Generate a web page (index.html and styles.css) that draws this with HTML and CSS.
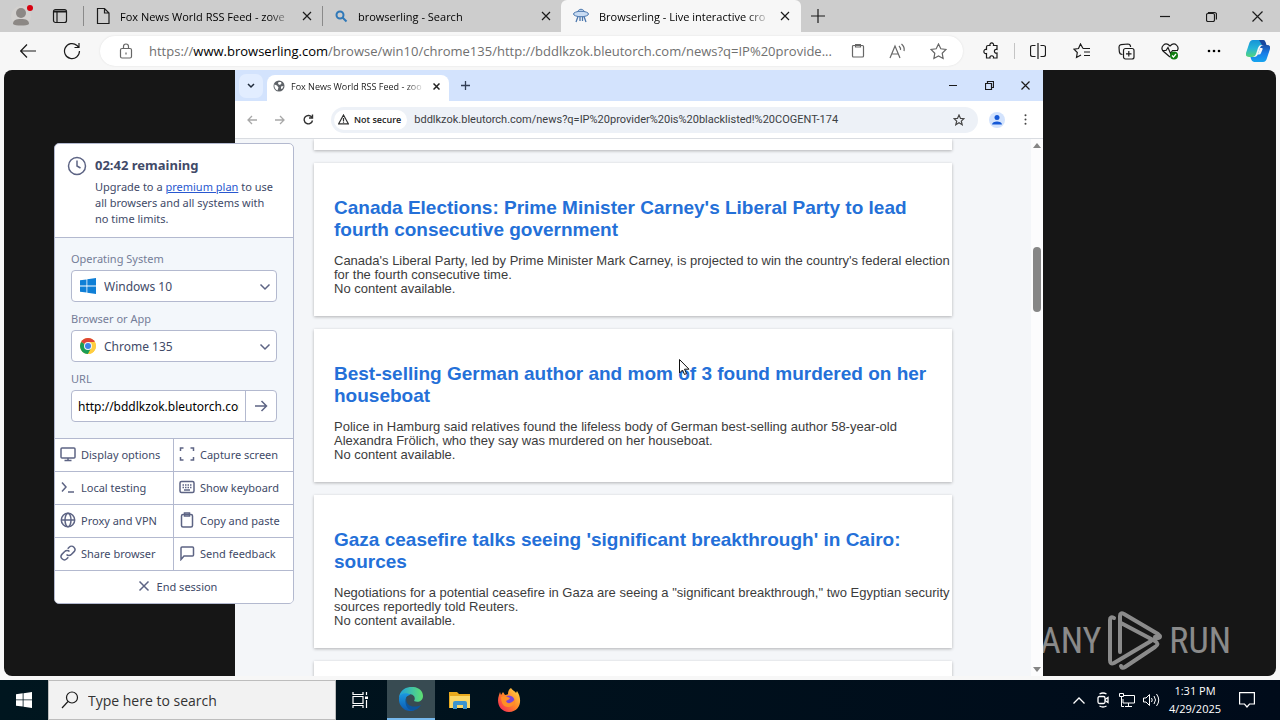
FILE: index.html
```html
<!DOCTYPE html>
<html lang="en">
<head>
<meta charset="utf-8">
<title>Browserling - Live interactive cross-browser testing</title>
<link rel="stylesheet" href="styles.css">
</head>
<body>
<div class="desktop">
  <header class="tabstrip">
    <button class="profile" aria-label="Profile"><svg width="22" height="22" viewBox="0 0 22 22"><circle cx="10" cy="11" r="10" fill="#d3d1cf"/><circle cx="10" cy="8" r="5" fill="#8c8885"/><path d="M2 19c0-4 3-5 8-5s8 1 8 5c-2 2-14 2-16 0z" fill="#8c8885"/><circle cx="19" cy="3" r="3" fill="#d8000f"/></svg></button>
    <button class="workspaces" aria-label="Tab actions"><svg class="line" width="16" height="16" viewBox="0 0 16 16"><rect x="1.500" y="1.500" width="13" height="13" rx="2"/><path d="M1.500 4h13M2 3h12M5 4v10"/></svg></button>
    <span class="strip-sep"></span>
    <div class="tab tab-first"><svg class="line" width="16" height="18" viewBox="0 0 16 18"><path d="M2.500 1.500h7l4.500 4.500v10.500h-11.500zM9.500 1.500v4.500h4.500"/></svg><span class="tab-title">Fox News World RSS Feed - zove</span><button class="close" aria-label="Close tab"><svg class="line" width="10" height="10" viewBox="0 0 10 10"><path d="M1 1l8 8M9 1l-8 8"/></svg></button></div>
    <span class="strip-sep"></span>
    <div class="tab"><svg width="14" height="14" viewBox="0 0 14 14" fill="none" stroke="#2f78b8" stroke-width="2"><circle cx="6" cy="6" r="3.500"/><path d="M8.500 8.500l4 4"/></svg><span class="tab-title">browserling - Search</span><button class="close" aria-label="Close tab"><svg class="line" width="10" height="10" viewBox="0 0 10 10"><path d="M1 1l8 8M9 1l-8 8"/></svg></button></div>
    <div class="tab tab-active"><svg width="18" height="16" viewBox="0 0 18 16" fill="#c9dcf3" stroke="#4d78ae"><path d="M5.500 5c0-5 7-5 7 0"/><ellipse cx="9" cy="6" rx="7.500" ry="2.700"/><path d="M6 8.500l-2 5.500M8 9v4M10.500 9v4M12 8.500l2 5.500" fill="none" stroke-width="1.300"/></svg><span class="tab-title">Browserling - Live interactive cro</span><button class="close" aria-label="Close tab"><svg class="line" width="10" height="10" viewBox="0 0 10 10"><path d="M1 1l8 8M9 1l-8 8"/></svg></button></div>
    <button class="new-tab" aria-label="New tab"><svg class="line" width="14" height="14" viewBox="0 0 14 14"><path d="M7 0v14M0 7h14"/></svg></button>
    <div class="win-controls">
      <button aria-label="Minimize"><svg class="line" width="10" height="10" viewBox="0 0 10 10"><path d="M0 5.500h10"/></svg></button>
      <button aria-label="Restore"><svg class="line" width="11" height="11" viewBox="0 0 11 11"><rect x=".5" y="2.500" width="8" height="8" rx="1.500"/><path d="M2.500 2v-.5h6q2 0 2 2v5"/></svg></button>
      <button aria-label="Close"><svg class="line" width="11" height="11" viewBox="0 0 11 11"><path d="M.5 .5l10 10M10.500 .5l-10 10"/></svg></button>
    </div>
  </header>

  <nav class="toolbar">
    <button aria-label="Back"><svg class="line" width="16" height="14" viewBox="0 0 16 14"><path d="M16 7H1M7 .5L.7 7 7 13.500"/></svg></button>
    <button aria-label="Refresh"><svg class="line" width="18" height="18" viewBox="0 0 18 18"><path d="M16.500 9A7.500 7.500 0 1 1 14 3.500L15.500 5M16 1v4.500h-4.500"/></svg></button>
    <div class="omnibox">
      <button class="lock" aria-label="Site information"><svg class="line" width="14" height="16" viewBox="0 0 14 16"><rect x="1.500" y="5.500" width="11" height="9.500" rx="1.500"/><path d="M4.500 5V3.500a2.500 2.500 0 0 1 5 0V5M7 9.500v2"/></svg></button>
      <div class="address" role="textbox" contenteditable="true" spellcheck="false" aria-label="Address">https://<b>www.browserling.com</b>/browse/win10/chrome135/http://bddlkzok.bleutorch.com/news?q=IP%20provide...</div>
      <button aria-label="Paste"><svg class="line" width="14" height="16" viewBox="0 0 14 16"><rect x="1.500" y="2.500" width="11" height="11.500" rx="1"/><path d="M4.500 2v2h5v-2M4 1.500h6"/></svg></button>
      <button aria-label="Read aloud"><svg class="line" width="18" height="16" viewBox="0 0 18 16"><path d="M1 15L6 3l5 12M2.500 11h7M10 3q2 2 1.500 4M12.500 1q3.500 3 2.500 7"/></svg></button>
      <button aria-label="Add to favorites"><svg class="line" width="17" height="17" viewBox="0 0 17 17"><path d="M8.500 1l2.300 4.800 5.200.7-3.800 3.700.9 5.300-4.600-2.500-4.600 2.500.9-5.300L1 6.500l5.200-.7z"/></svg></button>
    </div>
    <button aria-label="Extensions"><svg class="line" width="18" height="18" viewBox="0 0 18 18"><path d="M6 3.500h2c-1-3.500 4.500-3.500 3.500 0H15v4c-3.500-1-3.500 4.500 0 3.500v5h-3.500c1-3-4.500-3-3.500 0H4.500v-4.500C1 12.500 1 6.500 4.500 7.500V5q0-1.500 1.500-1.500z"/></svg></button>
    <span class="tool-sep"></span>
    <button aria-label="Split screen"><svg class="line" width="16" height="16" viewBox="0 0 16 16"><path d="M5.500 2.500H2.500q-2 0-2 2v7q0 2 2 2h3M10.500 2.500h3q2 0 2 2v7q0 2-2 2h-3M8 0v16"/></svg></button>
    <button aria-label="Favorites"><svg class="line" width="18" height="16" viewBox="0 0 18 16"><path d="M10 5.500L7.500 1 5.500 5.500l-4.500.7 3.300 3.300-.8 5L8 12M10 5.500h7M11 9h6M11 12.500h6"/></svg></button>
    <button aria-label="Collections"><svg class="line" width="17" height="17" viewBox="0 0 17 17"><path d="M4.500 11.500q-3 0-3.200-3L1 4q0-2 2-2.300l7-.7q2 0 2.500 2v1"/><rect x="5.500" y="5.500" width="10.500" height="10.500" rx="2"/><path d="M10.800 8v5.500M8 10.800h5.500"/></svg></button>
    <button aria-label="Browser essentials"><svg class="line" width="18" height="17" viewBox="0 0 18 17"><path d="M9 14L2 8C-1 4 4-2 9 3c5-5 10 1 7 5M1 7.500h4l2-3 2.500 6 2-3H17"/><circle cx="13" cy="12.500" r="4" fill="#107c10" stroke="none"/><path d="M11 12.500l1.500 1.500 2.500-3" stroke="#fff"/></svg></button>
    <button aria-label="Settings and more"><svg width="14" height="4" viewBox="0 0 14 4"><circle cx="2" cy="2" r="1.300"/><circle cx="7" cy="2" r="1.300"/><circle cx="12" cy="2" r="1.300"/></svg></button>
    <button aria-label="Copilot"><svg width="24" height="24" viewBox="0 0 24 24"><defs><linearGradient id="cpA" x2="0" y2="1"><stop stop-color="#1693d8"/><stop offset=".5" stop-color="#26b4d8"/><stop offset="1" stop-color="#55d57b"/></linearGradient><linearGradient id="cpB" x2="0" y2="1"><stop stop-color="#1b50a8"/><stop offset=".5" stop-color="#187ee8"/><stop offset="1" stop-color="#17a5ef"/></linearGradient></defs><path d="M7 1h10q1.500 0 2 2l1 3h-5q-2 0-3 3l-2 6q-1 3-4 3H3q-4 0-3-4L3 5q1-4 4-4z" fill="url(#cpA)"/><path d="M13 1h4q2 0 2.500 2l1 3H16z" fill="#17479e"/><path d="M17 23H8q-2 0-3-3l-.5-2H8q3 0 4-3l2-6q1-3 4-3h3q4 0 3 4l-3 9q-1 4-4 4z" fill="url(#cpB)"/><path d="M14 9h2q1 0 .5 1.500L15 14q-.5 1.500-2 1.500h-2q1-.5 1.500-2z" fill="#f7f7f7"/></svg></button>
  </nav>

  <main class="stage">
    <section class="screen">
      <div class="c-tabs">
        <button class="c-search" aria-label="Search tabs"><svg width="8" height="6" viewBox="0 0 8 6" fill="none" stroke="#1f2a3a" stroke-width="1.500"><path d="M1 1l3 3 3-3"/></svg></button>
        <div class="c-tab"><svg width="12" height="12" viewBox="0 0 12 12"><circle cx="6" cy="6" r="5.500" fill="#5f6368"/><path d="M1.500 4.500l2.500 1 1.500 2-1 3C2 9.500 1 7 1.500 4.500zM5.500 2h2.500l.5 1.500L7 5 5 4zM8 6.500l2.500-.5-1 2.500-1.500.5z" fill="#fff"/></svg><span class="c-title">Fox News World RSS Feed - zoo</span><button class="c-close" aria-label="Close tab"><svg width="7" height="7" viewBox="0 0 7 7" stroke="#222" stroke-width="1.500"><path d="M.5 .5l6 6M6.500 .5l-6 6"/></svg></button></div>
        <button class="c-new" aria-label="New tab"><svg width="9" height="9" viewBox="0 0 9 9" stroke="#333f55" stroke-width="1.300"><path d="M4.500 0v9M0 4.500h9"/></svg></button>
        <div class="c-controls">
          <button aria-label="Minimize"><svg class="line" width="9" height="9" viewBox="0 0 9 9"><path d="M0 4.500h8"/></svg></button>
          <button aria-label="Restore"><svg class="line" width="9" height="9" viewBox="0 0 9 9"><path d="M.5 2.500h6v6h-6zM2.500 2V.5h6v6H7"/></svg></button>
          <button aria-label="Close"><svg class="line" width="9" height="9" viewBox="0 0 9 9"><path d="M.5 .5l8 8M8.500 .5l-8 8"/></svg></button>
        </div>
      </div>
      <div class="c-bar">
        <button aria-label="Back"><svg width="10" height="10" viewBox="0 0 10 10" fill="none" stroke="#a8a8a8" stroke-width="1.300"><path d="M10 5H1M5 1L1 5l4 4"/></svg></button>
        <button aria-label="Forward"><svg width="10" height="10" viewBox="0 0 10 10" fill="none" stroke="#a8a8a8" stroke-width="1.300"><path d="M0 5h9M5 1l4 4-4 4"/></svg></button>
        <button aria-label="Reload"><svg width="11" height="11" viewBox="0 0 11 11" fill="none" stroke="#333" stroke-width="1.400"><path d="M9.500 6.500A4.200 4.200 0 1 1 9 3.500M9.500 .5v3.500H6"/></svg></button>
        <div class="c-omni">
          <button class="c-secure"><svg width="11" height="11" viewBox="0 0 11 11" fill="none" stroke="#333" stroke-width="1.200"><path d="M5.500 1L10.300 9.800H.7zM5.500 4v3M5.500 7.500v1.200"/></svg>Not secure</button>
          <input class="c-url" type="text" aria-label="Address" value="bddlkzok.bleutorch.com/news?q=IP%20provider%20is%20blacklisted!%20COGENT-174">
          <button aria-label="Bookmark"><svg width="12" height="12" viewBox="0 0 12 12" fill="none" stroke="#444" stroke-width="1.200"><path d="M6 1l1.500 3.400 3.500.3-2.700 2.400.9 3.600L6 8.800l-3.200 1.900.9-3.600L1 4.700l3.500-.3z"/></svg></button>
        </div>
        <button class="c-user" aria-label="User"><svg width="16" height="16" viewBox="0 0 16 16"><circle cx="8" cy="8" r="8" fill="#d3e3fd"/><circle cx="8" cy="5.500" r="2.500" fill="#1558d6"/><path d="M3 12.500c0-4 10-4 10 0z" fill="#1558d6"/></svg></button>
        <button class="c-menu" aria-label="Menu"><svg width="3" height="11" viewBox="0 0 3 11" fill="#444"><circle cx="1.500" cy="1.200" r="1"/><circle cx="1.500" cy="5.500" r="1"/><circle cx="1.500" cy="9.800" r="1"/></svg></button>
      </div>
      <div class="view">
        <div class="feed">
          <article class="card card-tail"></article>
          <article class="card"><h2>Canada Elections: Prime Minister Carney's Liberal Party to lead fourth consecutive government</h2><p>Canada's Liberal Party, led by Prime Minister Mark Carney, is projected to win the country's federal election for the fourth consecutive time.</p><p>No content available.</p></article>
          <article class="card"><h2>Best-selling German author and mom of 3 found murdered on her houseboat</h2><p>Police in Hamburg said relatives found the lifeless body of German best-selling author 58-year-old Alexandra Frölich, who they say was murdered on her houseboat.</p><p>No content available.</p></article>
          <article class="card"><h2>Gaza ceasefire talks seeing 'significant breakthrough' in Cairo: sources</h2><p>Negotiations for a potential ceasefire in Gaza are seeing a "significant breakthrough," two Egyptian security sources reportedly told Reuters.</p><p>No content available.</p></article>
          <article class="card"></article>
        </div>
        <div class="scrollbar"><svg width="8" height="5" viewBox="0 0 8 5"><path d="M4 0l4 5H0z" fill="#858585"/></svg><span class="track"><span class="thumb"></span></span><svg width="8" height="5" viewBox="0 0 8 5"><path d="M4 5l4-5H0z" fill="#858585"/></svg></div>
        <svg class="cursor" width="11" height="17" viewBox="0 0 11 17"><path d="M.5 .5v13.500l3-3 2 4.500 2-1-2-4.300h4.500z" fill="#fff" stroke="#111"/></svg>
      </div>
    </section>

    <aside class="panel">
      <div class="session">
        <svg class="ic" width="20" height="20" viewBox="0 0 20 20"><circle cx="10" cy="10" r="8.500"/><path d="M10 4.500V10l3.500 2"/></svg>
        <div><h1>02:42 remaining</h1><p>Upgrade to a <a href="#">premium plan</a> to use all browsers and all systems with no time limits.</p></div>
      </div>
      <form class="form">
        <label for="os">Operating System</label>
        <div class="field"><svg class="lead" width="16" height="16" viewBox="0 0 16 16" fill="#0f7fd6"><path d="M0 2.300L6.500 1.400v6.200H0zM7.300 1.300L16 0v7.600H7.300zM0 8.400h6.500v6.200L0 13.700zM7.300 8.400H16V16l-8.700-1.300z"/></svg><select id="os"><option>Windows 10</option></select><svg class="ic chev" width="12" height="8" viewBox="0 0 12 8"><path d="M1.500 1.500L6 6l4.500-4.500"/></svg></div>
        <label for="app">Browser or App</label>
        <div class="field"><svg class="lead" width="16" height="16" viewBox="0 0 16 16"><circle cx="8" cy="8" r="8" fill="#ffcd40"/><path d="M8 8L1.100 4A8 8 0 0 1 14.900 4z" fill="#de4437"/><path d="M8 8L1.100 4A8 8 0 0 0 8 16l3.300-6z" fill="#1b9d56"/><path d="M8 4h6.900a8 8 0 0 1-6.900 12l3.500-6z" fill="#ffcd40"/><circle cx="8" cy="8" r="4" fill="#f5f5f5"/><circle cx="8" cy="8" r="3" fill="#3d82e8"/></svg><select id="app"><option>Chrome 135</option></select><svg class="ic chev" width="12" height="8" viewBox="0 0 12 8"><path d="M1.500 1.500L6 6l4.500-4.500"/></svg></div>
        <label for="url">URL</label>
        <div class="url-row"><input id="url" type="text" value="http://bddlkzok.bleutorch.com/news"><button type="button" aria-label="Go"><svg class="ic" width="14" height="12" viewBox="0 0 14 12"><path d="M1 6h11.500M7.500 1l5 5-5 5"/></svg></button></div>
      </form>
      <div class="actions">
        <button><svg class="ic" width="16" height="16" viewBox="0 0 16 16"><rect x="1" y="2" width="14" height="10" rx="1"/><path d="M8 12v3M4.500 14.500h7"/></svg>Display options</button>
        <button><svg class="ic" width="16" height="16" viewBox="0 0 16 16"><path d="M1.500 5V2h3M11.500 2h3v3M14.500 11v3h-3M4.500 14h-3v-3"/></svg>Capture screen</button>
        <button><svg class="ic" width="16" height="16" viewBox="0 0 16 16"><path d="M2 3.500L6 8l-4 4.500M8 13h6"/></svg>Local testing</button>
        <button><svg class="ic" width="16" height="16" viewBox="0 0 16 16"><rect x="1" y="2.500" width="14" height="11" rx="1.500"/><path d="M3.500 6h9M3.500 8.500h9" stroke-dasharray="1.500 1"/><path d="M5 11h6"/></svg>Show keyboard</button>
        <button><svg class="ic" width="16" height="16" viewBox="0 0 16 16"><circle cx="8" cy="8" r="6.700"/><ellipse cx="8" cy="8" rx="3" ry="6.700"/><path d="M1.500 8h13"/></svg>Proxy and VPN</button>
        <button><svg class="ic" width="16" height="16" viewBox="0 0 16 16"><rect x="2.500" y="2.500" width="11" height="12.500" rx="1.500"/><path d="M5.500 1h5v3h-5z"/></svg>Copy and paste</button>
        <button><svg class="ic" width="16" height="16" viewBox="0 0 16 16"><path d="M6.500 9.500a3.300 3.300 0 0 0 4.800 0l2.600-2.600a3.300 3.300 0 0 0-4.700-4.700L7.700 3.700M9.500 6.500a3.300 3.300 0 0 0-4.800 0L2.100 9.100a3.300 3.300 0 0 0 4.700 4.700l1.500-1.500"/></svg>Share browser</button>
        <button><svg class="ic" width="16" height="16" viewBox="0 0 16 16"><path d="M2 14.500V3q0-1 1-1h10.500q1 0 1 1v7q0 1-1 1H5z"/></svg>Send feedback</button>
        <button class="end"><svg class="ic" width="12" height="12" viewBox="0 0 12 12"><path d="M1.500 1.500l9 9M10.500 1.500l-9 9"/></svg>End session</button>
      </div>
    </aside>

    <div class="watermark"><span>ANY</span><svg width="56" height="62" viewBox="0 0 56 62" fill="none" stroke="currentColor" stroke-width="4" stroke-linejoin="round" stroke-linecap="round"><path d="M7 8q-4-2-4 2v40q0 5 4 3l37-22M13 42V6q0-4 4-2l34 20q4 3 0 4l-3-1M14 13l34 18q5 3 0 6L18 57q-3 2-4-1"/></svg><span>RUN</span></div>
  </main>

  <footer class="taskbar">
    <button class="start" aria-label="Start"><svg width="16" height="16" viewBox="0 0 16 16" fill="#fff"><path d="M0 2.300L6.700 1.300v6.200H0zM7.500 1.200L16 0v7.500H7.500zM0 8.300h6.700v6.300L0 13.700zM7.500 8.300H16V16l-8.500-1.300z"/></svg></button>
    <label class="search"><svg class="line" width="18" height="18" viewBox="0 0 18 18"><circle cx="11" cy="6.500" r="5.500"/><path d="M7 10.500L1 17"/></svg><input type="text" placeholder="Type here to search" aria-label="Type here to search"></label>
    <button class="app" aria-label="Task view"><svg width="17" height="16" viewBox="0 0 17 16" fill="none" stroke="#fff" stroke-width="1.200"><path d="M1 0v2.500h10V0M1 4.500h10v7H1zM1 16v-2.500h10V16M14.500 0v3M14.500 8v8"/><path d="M13 4.500h3v2.500h-3z" fill="#fff" stroke="none"/></svg></button>
    <button class="app app-on" aria-label="Edge"><svg width="24" height="24" viewBox="0 0 24 24"><defs><linearGradient id="edA"><stop stop-color="#1f9fe0"/><stop offset="1" stop-color="#5ee070"/></linearGradient><linearGradient id="edB" x2="0" y2="1"><stop stop-color="#1b98e0"/><stop offset="1" stop-color="#0c5ab0"/></linearGradient></defs><path d="M0 11C1-4 24-3 24 9c0 5-5 7-9 5 2-3 0-7-5-7-6 0-9 2-10 4z" fill="url(#edA)"/><path d="M0 11c1-5 8-6 12-3-5 0-6 4-5 8 1 5 6 7 9 7C7 27-1 19 0 11z" fill="url(#edB)"/><path d="M9 9c-5 6 2 14 13 9-4 7-13 7-15 0-1-4 0-7 2-9z" fill="#0d559c"/></svg></button>
    <button class="app" aria-label="File Explorer"><svg width="22" height="19" viewBox="0 0 22 19"><path d="M0 1h8l2 2h11v14H0z" fill="#e8a91e"/><path d="M1 5h20v12H1z" fill="#fbd768"/><path d="M4 18v-6q0-2 2-2h10q2 0 2 2v6h-4v-4H8v4z" fill="#3d94cf"/></svg></button>
    <button class="app" aria-label="Firefox"><svg width="24" height="24" viewBox="0 0 24 24"><defs><linearGradient id="ff" x1="1" x2="0" y2="1"><stop stop-color="#ffe04a"/><stop offset=".5" stop-color="#ff8528"/><stop offset="1" stop-color="#f4185f"/></linearGradient></defs><path d="M14 0c2 3 4 3 5 5l1-2c5 7 5 20-8 21C3 24-1 15 2 7l1-3 1 3 2-3 2 3c2 0 3-1 3-1 0-3 1-5 3-6z" fill="url(#ff)"/><circle cx="12" cy="13" r="5.500" fill="#7a45d8"/><path d="M4 9c3-2 5-1 9 1-1 2-3 2-4 3 2 4 6 2 9-2 1 6-3 8-7 8-5 0-7-5-7-10z" fill="#ff8e26"/></svg></button>
    <div class="tray">
      <button aria-label="Show hidden icons"><svg width="12" height="7" viewBox="0 0 12 7" fill="none" stroke="#fff" stroke-width="1.300"><path d="M.5 6.500L6 1l5.500 5.500"/></svg></button>
      <button aria-label="Meet now"><svg width="14" height="16" viewBox="0 0 14 16" fill="none" stroke="#fff" stroke-width="1.300"><rect x="2" y="4.500" width="7" height="7" rx="1.500"/><path d="M9 7.500l3-2v5l-3-2M3.500 2q3.500-2 7 0M3.500 14q3.500 2 7 0"/></svg></button>
      <button aria-label="Network"><svg width="16" height="14" viewBox="0 0 16 14" fill="none" stroke="#fff"><path d="M5 2.500h10.500v7.500H4V6M9.500 10v3M6 13.500h7M.5 .5h4v3h-4zM2.500 3.500V13.500H5"/></svg></button>
      <button aria-label="Volume"><svg width="17" height="14" viewBox="0 0 17 14" fill="none" stroke="#fff"><path d="M.5 5v4h2.500l3.500 3.500v-11L3 5zM8.500 5q1.500 2 0 4M11 3q3 4 0 8M13.500 1q4.500 6 0 12"/></svg></button>
      <div class="clock"><span>1:31 PM</span><span>4/29/2025</span></div>
      <button class="notify" aria-label="Notifications"><svg width="16" height="16" viewBox="0 0 16 16" fill="none" stroke="#fff" stroke-width="1.200"><path d="M.6 .6h14.800v11.400H10.500L8 15 5.500 12H.6z"/></svg></button>
    </div>
  </footer>
</div>
</body>
</html>
```
FILE: styles.css
```css
* { box-sizing: border-box; }
body { margin: 0; font-family: "Open Sans", "Noto Sans", sans-serif; font-size: 11px; color: #111; }
button { display: inline-flex; align-items: center; justify-content: center; padding: 0; border: 0; background: none; font: inherit; color: inherit; }
input, select { font: inherit; color: inherit; border: 0; background: none; outline: 0; min-width: 0; }
svg { flex: none; display: block; }
h1, h2, p { margin: 0; }
.line { fill: none; stroke: #1b1b1b; stroke-width: 1.2; }
.desktop { display: flex; flex-direction: column; height: 100vh; overflow: hidden; background: #f7f7f7; }

.tabstrip { display: flex; align-items: center; height: 32px; background: #cdcdcd; }
.profile { width: 44px; }
.workspaces { width: 32px; }
.strip-sep { width: 1px; height: 20px; margin-left: 7px; background: #8a8a8a; }
.tab { flex: 0 1 238px; display: flex; align-items: center; height: 32px; padding: 0 10px 0 11px; gap: 10px; min-width: 0; }
.tab-first { margin-right: -7px; gap: 9px; }
.tab-active { flex-basis: 240px; padding-right: 11px; background: #f7f7f7; border-radius: 6px 6px 0 0; gap: 9px; }
.tab-title { flex: 1; overflow: hidden; white-space: nowrap; color: #000; mask-image: linear-gradient(90deg, #000 86%, transparent); }
.new-tab { width: 34px; height: 32px; }
.win-controls { display: flex; margin-left: auto; }
.win-controls button { width: 46px; height: 32px; }

.toolbar { display: flex; align-items: center; height: 38px; padding-left: 6px; }
.toolbar > button { width: 44px; height: 38px; flex: none; }
.omnibox { flex: 1; display: flex; align-items: center; height: 30px; margin: 0 6px; padding-right: 5px; border-radius: 15px; background: #fff; box-shadow: 0 0 2px #ddd; min-width: 0; }
.omnibox button { width: 40px; height: 30px; flex: none; }
.omnibox .lock { width: 49px; padding-left: 3px; }
.omnibox .line { stroke: #666; }
.address { flex: 1; overflow: hidden; white-space: nowrap; font-size: 13px; color: #707070; outline: 0; }
.address b { font-weight: 400; color: #000; }
.tool-sep { width: 1px; height: 16px; margin: 0 1px; background: #c4c4c4; }

.stage { position: relative; flex: 1; display: flex; justify-content: center; min-height: 0; margin: 0 4px 4px; padding-right: 2px; border-radius: 8px; overflow: hidden; background: #161616; }
.screen { flex: 0 1 808px; display: flex; flex-direction: column; min-width: 0; background: #fff; }
.c-tabs { display: flex; align-items: center; height: 31px; padding-left: 4px; background: #d3e3fd; font-size: 9px; }
.c-search { width: 24px; height: 24px; border-radius: 7px; background: #e2edff; }
.c-tab { flex: 0 1 182px; display: flex; align-items: center; gap: 6px; height: 26px; margin: 5px 0 0 4px; padding: 0 8px 4px 6px; background: #fff; border-radius: 8px 8px 0 0; color: #222; min-width: 0; }
.c-title { flex: 1; overflow: hidden; white-space: nowrap; mask-image: linear-gradient(90deg, #000 86%, transparent); }
.c-close { width: 10px; }
.c-new { width: 32px; height: 30px; }
.c-controls { display: flex; margin-left: auto; }
.c-controls button { width: 36px; height: 31px; }
.c-bar { display: flex; align-items: center; height: 38px; padding: 0 10px 0 3px; border-bottom: 1px solid #d9dce1; }
.c-bar > button { width: 28px; height: 28px; }
.c-omni { flex: 1; display: flex; align-items: center; height: 26px; margin: 0 5px 0 9px; padding: 0 8px 0 3px; border-radius: 13px; background: #edf1f7; min-width: 0; }
.c-secure { gap: 5px; height: 20px; padding: 0 6px 0 4px; border-radius: 10px; background: #fff; color: #222; font-size: 9px; font-weight: 600; }
.c-url { flex: 1; padding: 0 7px; color: #3c4043; font-family: Roboto, sans-serif; font-size: 11px; }
.c-omni > button:last-child { width: 22px; }
.c-bar .c-menu { width: 15px; margin-left: 7px; }

.view { position: relative; flex: 1; display: flex; justify-content: center; min-height: 0; overflow: hidden; background: #f4f6f9; font-family: "Liberation Sans", Arial, sans-serif; }
.feed { flex: 0 1 638px; display: flex; flex-direction: column; gap: 13px; margin: 0 auto; height: 0; }
.card { flex: none; min-height: 80px; padding: 34px 0 20px 20px; background: #fff; box-shadow: 0 1px 3px rgba(0, 0, 0, .28); }
.card-tail { min-height: 11px; padding: 0; }
.card h2 { margin-bottom: 13px; padding-right: 16px; font-size: 19px; line-height: 22px; color: #2470d8; }
.card p { font-size: 13px; line-height: 14px; color: #3c3c3c; }
.scrollbar { width: 12px; display: flex; flex-direction: column; align-items: center; gap: 4px; padding: 4px 0; background: #fcfcfd; }
.track { flex: 1; display: flex; flex-direction: column; width: 8px; padding-top: 95px; }
.thumb { height: 65px; border-radius: 4px; background: #868686; }
.cursor { position: absolute; left: 444px; top: 220px; }

.panel { position: absolute; left: 50px; top: 73px; width: 240px; border: 1px solid #b3b9cf; border-radius: 5px; overflow: hidden; background: #fff; color: #414a68; font-family: "Noto Sans", sans-serif; }
.ic { fill: none; stroke: #5d6484; stroke-width: 1.5; }
.session { display: flex; gap: 8px; padding: 12px 14px 10px 12px; border-bottom: 1px solid #b3b9cf; }
.session h1 { font-size: 13px; line-height: 19px; }
.session p { margin: 4px 0 0; line-height: 16px; }
.session a { color: #2857cf; }
.form { display: flex; flex-direction: column; padding: 13px 16px 16px; background: #f3f7fb; }
.form label { margin-bottom: 3px; line-height: 16px; color: #757d98; }
.field { position: relative; display: flex; height: 32px; margin-bottom: 9px; border: 1px solid #b3b9cf; border-radius: 4px; background: #fff; }
.lead { position: absolute; left: 8px; top: 7px; }
.chev { position: absolute; right: 5px; top: 12px; pointer-events: none; }
.field select { flex: 1; padding-left: 32px; appearance: none; font-size: 12px; }
.url-row { display: flex; height: 32px; border: 1px solid #b3b9cf; border-radius: 4px; background: #fff; }
.url-row input { flex: 1; margin: 0 6px; padding: 0; color: #000; font-size: 12px; }
.url-row button { width: 31px; border-left: 1px solid #b3b9cf; }
.actions { display: grid; grid-template-columns: 118px 1fr; gap: 1px; padding-top: 1px; background: #b3b9cf; }
.actions button { justify-content: flex-start; gap: 5px; height: 32px; padding: 0 0 2px 5px; background: #fff; white-space: nowrap; }
.actions .end { grid-column: 1 / -1; justify-content: center; gap: 7px; padding: 0 0 2px 7px; }

.watermark { position: absolute; right: 45px; bottom: 4px; display: flex; align-items: center; gap: 6px; color: rgba(255, 255, 255, .5); font-family: "Roboto Condensed", "Liberation Sans Narrow", Roboto, sans-serif; font-size: 36px; }

.taskbar { display: flex; align-items: center; height: 40px; background: linear-gradient(90deg, #00161f, #000b1a); color: #fff; }
.start { width: 48px; height: 40px; }
.search { flex: 0 1 288px; display: flex; align-items: center; gap: 9px; height: 40px; padding-left: 12px; border: 1px solid #bdbdbd; background: #f2f2f2; color: #333; min-width: 0; }
.search input { flex: 1; padding: 0; font-size: 14px; }
.search input::placeholder { color: #333; opacity: 1; }
.app { width: 49px; height: 40px; }
.app-on { margin-left: 2px; width: 48px; background: #384b52; border-bottom: 2px solid #76b9ed; }
.tray { display: flex; align-items: center; margin-left: auto; padding-right: 13px; }
.tray button { width: 24px; height: 40px; }
.clock { display: flex; flex-direction: column; align-items: center; width: 64px; line-height: 18px; white-space: nowrap; }
.tray .notify { width: 40px; }
```
